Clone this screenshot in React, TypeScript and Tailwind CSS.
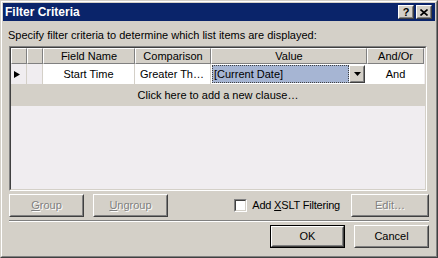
import React from "react";

const raised =
  "border border-t-white border-l-white border-r-[#404040] border-b-[#404040]";
const raisedInner =
  "border border-t-[#d4d0c8] border-l-[#d4d0c8] border-r-[#808080] border-b-[#808080]";

function Button({
  children,
  disabled,
  isDefault,
  className = "",
}: {
  children: React.ReactNode;
  disabled?: boolean;
  isDefault?: boolean;
  className?: string;
}) {
  const body = (
    <div className={`h-full w-full ${raised}`}>
      <div className={`flex h-full w-full items-center justify-center ${raisedInner}`}>
        <span
          className={
            disabled
              ? "text-[#808080] [text-shadow:1px_1px_0_#ffffff]"
              : "text-black"
          }
        >
          {children}
        </span>
      </div>
    </div>
  );
  if (isDefault) {
    return <div className={`border border-black ${className}`}>{body}</div>;
  }
  return <div className={className}>{body}</div>;
}

function HeaderCell({ w, label }: { w: string; label?: string }) {
  return (
    <div
      className={`${w} h-full shrink-0 border border-t-white border-l-white border-r-[#808080] border-b-[#808080] bg-[#d4d0c8] flex items-center justify-center`}
    >
      {label}
    </div>
  );
}

function TitleButton({ children }: { children: React.ReactNode }) {
  return (
    <div className={`h-[14px] w-[16px] bg-[#d4d0c8] ${raised}`}>
      <div className={`flex h-full w-full items-center justify-center ${raisedInner}`}>
        {children}
      </div>
    </div>
  );
}

export default function App() {
  return (
    <div
      className="w-[438px] h-[258px] bg-[#d4d0c8] text-[11px] leading-[13px] text-black border border-t-[#d4d0c8] border-l-[#d4d0c8] border-r-[#404040] border-b-[#404040]"
      style={{ fontFamily: '"Liberation Sans", Arial, sans-serif' }}
    >
      <div className="h-full w-full border border-t-white border-l-white border-r-[#808080] border-b-[#808080] p-px flex flex-col">
        {/* title bar */}
        <div className="h-[18px] shrink-0 bg-[#0a246a] flex items-center pl-[2px] pr-[3px]">
          <span className="font-bold text-white text-[12px]">Filter Criteria</span>
          <div className="ml-auto flex gap-[2px]">
            <TitleButton>
              <span className="font-bold text-[11px] leading-none text-black">?</span>
            </TitleButton>
            <TitleButton>
              <svg width="8" height="7" viewBox="0 0 8 7">
                <path d="M0.5 0.5 L7.5 6.5 M7.5 0.5 L0.5 6.5" stroke="black" strokeWidth="1.6" />
              </svg>
            </TitleButton>
          </div>
        </div>

        <div className="flex flex-col px-[6px]">
          <div className="mt-[8px] -ml-px">
            Specify filter criteria to determine which list items are displayed:
          </div>

          {/* grid */}
          <div className="mt-[4px] w-[418px] h-[145px] border border-t-[#808080] border-l-[#808080] border-r-white border-b-white">
            <div className="h-full w-full border border-t-[#404040] border-l-[#404040] border-r-[#d4d0c8] border-b-[#d4d0c8] bg-[#f0edf0] flex flex-col">
              <div className="flex h-[16px] shrink-0">
                <HeaderCell w="w-[16px]" />
                <HeaderCell w="w-[16px]" />
                <HeaderCell w="w-[92px]" label="Field Name" />
                <HeaderCell w="w-[76px]" label="Comparison" />
                <HeaderCell w="w-[156px]" label="Value" />
                <HeaderCell w="w-[57px]" label="And/Or" />
              </div>
              <div className="flex h-[21px] shrink-0 border-b border-[#d4d0c8]">
                <div className="w-[16px] shrink-0 flex items-center pl-[3px] border-r border-[#d4d0c8]">
                  <svg width="6" height="7" viewBox="0 0 6 7">
                    <polygon points="0,0 6,3.5 0,7" fill="black" />
                  </svg>
                </div>
                <div className="w-[16px] shrink-0 border-r border-[#d4d0c8]" />
                <div className="w-[92px] shrink-0 bg-white flex items-center justify-center border-r border-[#d4d0c8]">
                  Start Time
                </div>
                <div className="w-[76px] shrink-0 bg-white flex items-center pl-[5px] border-r border-[#d4d0c8]">
                  Greater Th…
                </div>
                <div className="w-[156px] shrink-0 bg-white flex items-center p-px pr-[2px]">
                  <div className="flex-1 h-full bg-[#a6b5d3] border border-dotted border-[#404040] flex items-center pl-px">
                    [Current Date]
                  </div>
                  <div className={`w-[16px] h-full shrink-0 bg-[#d4d0c8] ${raised}`}>
                    <div className={`flex h-full w-full items-center justify-center ${raisedInner}`}>
                      <svg width="7" height="4" viewBox="0 0 7 4">
                        <polygon points="0,0 7,0 3.5,4" fill="black" />
                      </svg>
                    </div>
                  </div>
                </div>
                <div className="w-[57px] shrink-0 bg-white flex items-center justify-center">
                  And
                </div>
              </div>
              <div className="h-[21px] shrink-0 w-[414px] bg-[#d4d0c8] flex items-center justify-center">
                Click here to add a new clause…
              </div>
            </div>
          </div>

          {/* group row */}
          <div className="mt-[3px] flex h-[23px] items-stretch">
            <Button disabled className="w-[75px]">
              <u>G</u>roup
            </Button>
            <Button disabled className="ml-[9px] w-[75px]">
              <u>U</u>ngroup
            </Button>
            <div className="ml-auto flex items-center">
              <div className="h-[13px] w-[13px] border border-t-[#808080] border-l-[#808080] border-r-white border-b-white">
                <div className="h-full w-full bg-white border border-t-[#404040] border-l-[#404040] border-r-[#d4d0c8] border-b-[#d4d0c8]" />
              </div>
              <span className="ml-[5px] tracking-[-0.2px]">
                Add <u>X</u>SLT Filtering
              </span>
            </div>
            <Button disabled className="ml-[11px] w-[78px]">
              Edit…
            </Button>
          </div>

          <div className="mt-[3px] h-[2px] border-t border-t-[#808080] border-b border-b-white" />

          <div className="mt-[3px] flex h-[23px] justify-end gap-[9px]">
            <Button isDefault className="w-[75px]">
              OK
            </Button>
            <Button className="w-[75px]">Cancel</Button>
          </div>
        </div>
      </div>
    </div>
  );
}
